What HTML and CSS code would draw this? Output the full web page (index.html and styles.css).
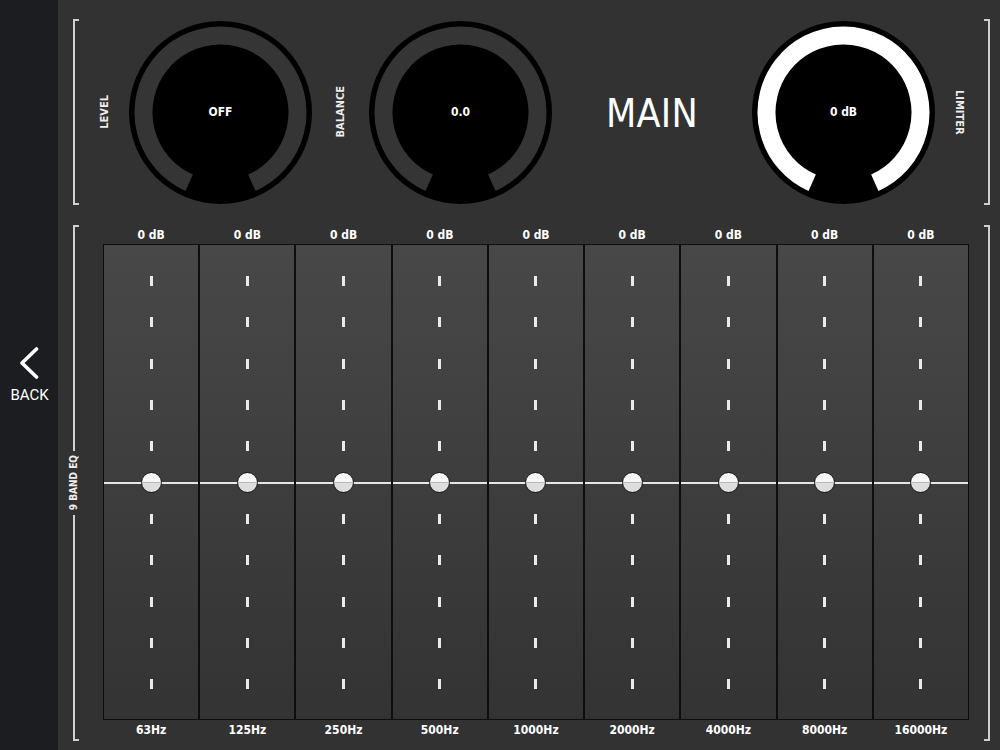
FILE: index.html
```html
<!DOCTYPE html>
<html lang="en">
<head>
  <meta charset="UTF-8" />
  <title>Main EQ</title>
  <link rel="stylesheet" href="styles.css">
</head>
<body>
  <div class="app">
    <aside class="sidebar">
      <a class="back" href="#">
        <svg class="chevron" width="20" height="32" viewBox="0 0 20 32"><polyline points="17.5,2 3,16 17.5,30" /></svg>
        <span>BACK</span>
      </a>
    </aside>

    <main class="main">
      <section class="top">
        <div class="bracket bracket-left"></div>
        <div class="vlabel up">LEVEL</div>
        <div class="knob">
          <svg class="dial" width="183" height="183" viewBox="0 0 183 183"><circle cx="91.5" cy="91.5" r="91.5" /><path class="track" d="M60.2 161.8A77 77 0 1 1 122.8 161.8" /></svg>
          <span class="knob-value">OFF</span>
        </div>
        <div class="vlabel up">BALANCE</div>
        <div class="knob">
          <svg class="dial" width="183" height="183" viewBox="0 0 183 183"><circle cx="91.5" cy="91.5" r="91.5" /><path class="track" d="M60.2 161.8A77 77 0 1 1 122.8 161.8" /></svg>
          <span class="knob-value">0.0</span>
        </div>
        <h1 class="title">MAIN</h1>
        <div class="knob knob-on">
          <svg class="dial" width="183" height="183" viewBox="0 0 183 183"><circle cx="91.5" cy="91.5" r="91.5" /><path class="track" d="M60.2 161.8A77 77 0 1 1 122.8 161.8" /></svg>
          <span class="knob-value">0 dB</span>
        </div>
        <div class="vlabel down">LIMITER</div>
        <div class="bracket bracket-right"></div>
      </section>

      <section class="eq">
        <div class="eq-bracket">
          <div class="seg seg-top"></div>
          <div class="vlabel up eq-label">9 BAND EQ</div>
          <div class="seg seg-bottom"></div>
        </div>

        <div class="eq-body">
          <div class="eq-labels">
            <span>0 dB</span><span>0 dB</span><span>0 dB</span><span>0 dB</span><span>0 dB</span><span>0 dB</span><span>0 dB</span><span>0 dB</span><span>0 dB</span>
          </div>
          <div class="eq-table">
            <div class="band"><i class="ticks"></i><div class="handle"><b class="thumb"></b></div><i class="ticks"></i></div>
            <div class="band"><i class="ticks"></i><div class="handle"><b class="thumb"></b></div><i class="ticks"></i></div>
            <div class="band"><i class="ticks"></i><div class="handle"><b class="thumb"></b></div><i class="ticks"></i></div>
            <div class="band"><i class="ticks"></i><div class="handle"><b class="thumb"></b></div><i class="ticks"></i></div>
            <div class="band"><i class="ticks"></i><div class="handle"><b class="thumb"></b></div><i class="ticks"></i></div>
            <div class="band"><i class="ticks"></i><div class="handle"><b class="thumb"></b></div><i class="ticks"></i></div>
            <div class="band"><i class="ticks"></i><div class="handle"><b class="thumb"></b></div><i class="ticks"></i></div>
            <div class="band"><i class="ticks"></i><div class="handle"><b class="thumb"></b></div><i class="ticks"></i></div>
            <div class="band"><i class="ticks"></i><div class="handle"><b class="thumb"></b></div><i class="ticks"></i></div>
          </div>
          <div class="eq-labels eq-freqs">
            <span>63Hz</span><span>125Hz</span><span>250Hz</span><span>500Hz</span><span>1000Hz</span><span>2000Hz</span><span>4000Hz</span><span>8000Hz</span><span>16000Hz</span>
          </div>
        </div>

        <div class="bracket bracket-right"></div>
      </section>
    </main>
  </div>
</body>
</html>
```

FILE: styles.css
```css
* {
  box-sizing: border-box;
}

body {
  margin: 0;
  font-family: "DejaVu Sans Condensed", "DejaVu Sans", sans-serif;
  font-stretch: condensed;
  background-color: #1c1d21;
  color: #ffffff;
}

.app {
  display: flex;
  width: 1000px;
  height: 750px;
}

/* sidebar */

.sidebar {
  width: 58px;
  background-color: #1c1d21;
  display: flex;
  flex-direction: column;
  align-items: center;
  justify-content: center;
}

.back {
  display: flex;
  flex-direction: column;
  align-items: center;
  gap: 7px;
  color: #ffffff;
  text-decoration: none;
  font-family: Roboto, "Liberation Sans", sans-serif;
  font-stretch: normal;
  font-size: 15px;
  margin: 1px 0 0 1px;
}

.chevron polyline {
  fill: none;
  stroke: #ffffff;
  stroke-width: 3.6;
  stroke-linecap: round;
  stroke-linejoin: round;
}

/* main area */

.main {
  flex: 1;
  background-color: #323232;
  padding: 19px 10px 9px 9px;
  display: flex;
  flex-direction: column;
  gap: 20px;
}

.top {
  display: grid;
  grid-template-columns: 12px 50px 183px 57px 183px 1fr 183px 49px 6px;
  align-items: center;
  height: 186px;
}

.bracket {
  width: 6px;
  height: 100%;
  border: 2px solid #cfcfcf;
}

.bracket-left {
  border-right: none;
  justify-self: end;
}

.bracket-right {
  border-left: none;
}

.vlabel {
  justify-self: center;
  font-size: 11px;
  font-weight: bold;
  color: #eeeeee;
  writing-mode: vertical-rl;
}

.vlabel.up {
  transform: rotate(180deg);
}

.knob {
  display: grid;
  place-items: center;
}

.knob > * {
  grid-area: 1 / 1;
}

.dial circle {
  fill: #000000;
}

.dial .track {
  fill: none;
  stroke: #353535;
  stroke-width: 18;
}

.knob-on .dial .track {
  stroke: #ffffff;
}

.knob-value {
  font-size: 12px;
  font-weight: bold;
}

.title {
  margin: 0;
  padding-top: 3px;
  justify-self: center;
  font-size: 39px;
  font-weight: normal;
  letter-spacing: 0.3px;
}

/* equalizer */

.eq {
  flex: 1;
  display: grid;
  grid-template-columns: 12px 1fr 6px;
}

.eq-bracket {
  display: flex;
  flex-direction: column;
}

.seg {
  flex: 1;
  width: 6px;
  margin-left: 6px;
  border-left: 2px solid #cfcfcf;
}

.seg-top {
  border-top: 2px solid #cfcfcf;
}

.seg-bottom {
  border-bottom: 2px solid #cfcfcf;
}

.eq-label {
  align-self: center;
  margin: 4px 0;
  font-size: 10px;
}

.eq-body {
  display: flex;
  flex-direction: column;
  margin: 0 15px 0 24px;
}

.eq-labels {
  display: grid;
  grid-template-columns: repeat(9, 1fr);
  gap: 2px;
  padding: 0 1px;
  height: 19px;
  line-height: 20px;
  text-align: center;
  font-size: 12px;
  font-weight: bold;
}

.eq-freqs {
  height: 21px;
  line-height: 21px;
}

.eq-table {
  flex: 1;
  display: grid;
  grid-template-columns: repeat(9, 1fr);
  gap: 2px;
  background-color: #0e0e0e;
  border: 1px solid #0e0e0e;
}

.band {
  display: flex;
  flex-direction: column;
  align-items: center;
  padding-top: 31px;
  background: linear-gradient(#484848, #333333);
}

.ticks {
  width: 3px;
  height: 175px;
  background: repeating-linear-gradient(#eaeaea 0 10px, transparent 10px 41.25px);
}

.handle {
  align-self: stretch;
  height: 22px;
  margin: 21px 0 20px;
  display: flex;
  justify-content: center;
  background: linear-gradient(transparent 10px, #e6e6e6 10px 12px, transparent 12px);
}

.thumb {
  width: 21px;
  height: 21px;
  border: 1px solid #1a1a1a;
  border-radius: 50%;
  background: linear-gradient(#f7f7f7 48%, #b8b8b8 48% 54%, #dedede 54%);
}
```
